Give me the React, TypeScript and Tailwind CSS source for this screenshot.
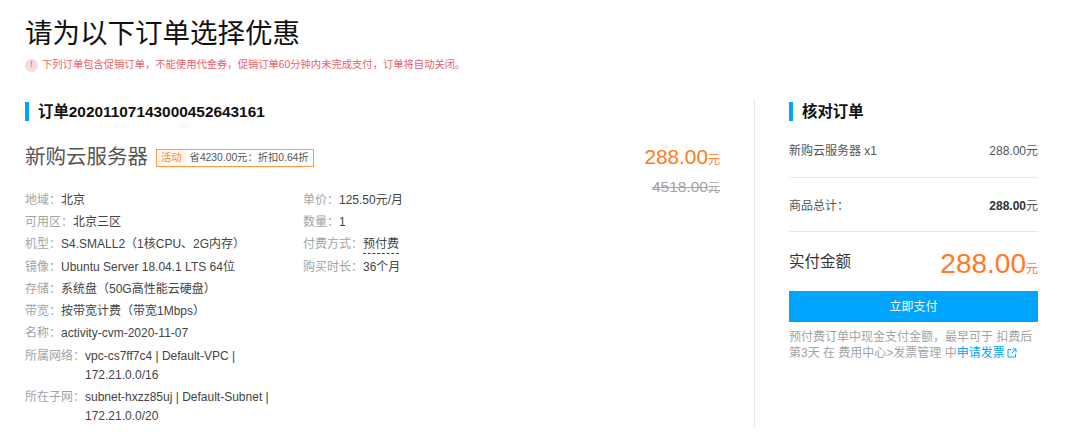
import React from "react";

const font = "font-['Liberation_Sans','Noto_Sans_CJK_SC',sans-serif]";

const leftRows = [
  { label: "地域：", value: "北京" },
  { label: "可用区：", value: "北京三区" },
  { label: "机型：", value: "S4.SMALL2（1核CPU、2G内存）" },
  { label: "镜像：", value: "Ubuntu Server 18.04.1 LTS 64位" },
  { label: "存储：", value: "系统盘（50G高性能云硬盘）" },
  { label: "带宽：", value: "按带宽计费（带宽1Mbps）" },
  { label: "名称：", value: "activity-cvm-2020-11-07" },
];

const rightRows = [
  { label: "单价：", value: "125.50元/月" },
  { label: "数量：", value: "1" },
  { label: "付费方式：", value: "预付费", dashed: true },
  { label: "购买时长：", value: "36个月" },
];

function SectionTitle({ children }: { children: React.ReactNode }) {
  return (
    <div className="flex items-center h-[19px]">
      <div className="w-1 h-[19px] bg-[#00a4ff]" />
      <h2 className="ml-[9px] text-[15.4px] font-bold text-[#111] leading-[19px]">{children}</h2>
    </div>
  );
}

function NetRow({ label, lines }: { label: string; lines: string[] }) {
  return (
    <div className="flex text-xs leading-[19px] mb-[3px]">
      <span className="w-[60px] shrink-0 text-[#a3a3a3]">{label}</span>
      <div className="text-[#444]">
        {lines.map((l) => (
          <div key={l}>{l}</div>
        ))}
      </div>
    </div>
  );
}

export default function App() {
  return (
    <div className={`w-[1080px] h-[437px] overflow-hidden bg-white pl-[25px] pt-[16px] ${font}`}>
      <h1 className="text-[27.5px] leading-9 text-[#111] font-normal">请为以下订单选择优惠</h1>
      <div className="flex items-center mt-[5px] h-4 text-[10.3px] text-[#e8616a]">
        <span className="w-[13px] h-[13px] rounded-full bg-[#f9d9dc] flex items-center justify-center text-[9px] mr-1">!</span>
        下列订单包含促销订单，不能使用代金券，促销订单60分钟内未完成支付，订单将自动关闭。
      </div>

      <div className="flex mt-[29px]">
        {/* order */}
        <div className="w-[729px] shrink-0 h-[335px]">
          <SectionTitle>订单20201107143000452643161</SectionTitle>
          <div className="flex mt-[22px]">
            <div className="w-[590px]">
              <div className="flex items-center h-7">
                <span className="text-[20.5px] text-[#555]">新购云服务器</span>
                <div className="ml-2 flex h-[18px] border border-[#ff9a47] text-[10.3px] leading-4 mt-0.5">
                  <span className="px-1 bg-[#fdf5ee] text-[#ff8a2b]">活动</span>
                  <span className="px-1 text-[#555]">省4230.00元：折扣0.64折</span>
                </div>
              </div>
              <div className="flex mt-[20px]">
                <div className="w-[278px] shrink-0">
                  {leftRows.map((r) => (
                    <div key={r.label} className="flex text-xs h-[22.2px] leading-[19px]">
                      <span className="text-[#a3a3a3]">{r.label}</span>
                      <span className="text-[#444]">{r.value}</span>
                    </div>
                  ))}
                  <div className="h-px" />
                  <NetRow label="所属网络：" lines={["vpc-cs7ff7c4 | Default-VPC |", "172.21.0.0/16"]} />
                  <NetRow label="所在子网：" lines={["subnet-hxzz85uj | Default-Subnet |", "172.21.0.0/20"]} />
                </div>
                <div>
                  {rightRows.map((r) => (
                    <div key={r.label} className="flex text-xs h-[22.2px] leading-[19px]">
                      <span className="text-[#a3a3a3]">{r.label}</span>
                      <span className={r.dashed ? "text-[#444] border-b border-dashed border-[#444] h-[19px]" : "text-[#444]"}>{r.value}</span>
                    </div>
                  ))}
                </div>
              </div>
            </div>
            <div className="w-[105px] text-right">
              <div className="text-[20.8px] leading-6 text-[#ff7a20] mt-[2px]">
                288.00<span className="text-xs">元</span>
              </div>
              <div className="text-[15.5px] leading-5 text-[#a3a3a3] line-through mt-2">
                4518.00<span className="text-xs">元</span>
              </div>
            </div>
          </div>
        </div>

        {/* summary */}
        <div className="w-[284px] shrink-0 h-[328px] -mt-[3px] border-l border-[#e5e8ed] pl-[34px] pt-[3px]">
          <SectionTitle>核对订单</SectionTitle>
          <div className="flex justify-between text-xs text-[#555] mt-[21px] leading-[19px]">
            <span>新购云服务器 x1</span>
            <span>288.00元</span>
          </div>
          <div className="h-px bg-[#e5e8ed] mt-[16px]" />
          <div className="flex justify-between text-xs text-[#555] mt-[19px] leading-[19px]">
            <span>商品总计：</span>
            <span>
              <b className="text-[#333]">288.00</b>元
            </span>
          </div>
          <div className="h-px bg-[#e5e8ed] mt-[15px]" />
          <div className="flex justify-between items-center mt-[14px] h-9">
            <span className="text-[15.5px] text-[#333] -mt-1">实付金额</span>
            <span className="text-[28px] leading-9 text-[#ff7a20]">
              288.00<span className="text-xs">元</span>
            </span>
          </div>
          <button className="block w-full h-[31px] mt-[9px] bg-[#00a4ff] text-white text-xs">立即支付</button>
          <p className="mt-[7px] text-xs leading-4 text-[#a3a3a3]">
            预付费订单中现金支付金额，最早可于 扣费后 第3天 在 费用中心&gt;发票管理 中
            <span className="text-[#00a4ff]">申请发票</span>
            <svg className="inline-block ml-0.5 -mt-0.5" width="10" height="10" viewBox="0 0 10 10" fill="none" stroke="#00a4ff" strokeWidth="1">
              <path d="M4 1.5H1v7.5h7.5V6M5.5 1H9v3.5M9 1L5 5" />
            </svg>
          </p>
        </div>
      </div>
    </div>
  );
}
